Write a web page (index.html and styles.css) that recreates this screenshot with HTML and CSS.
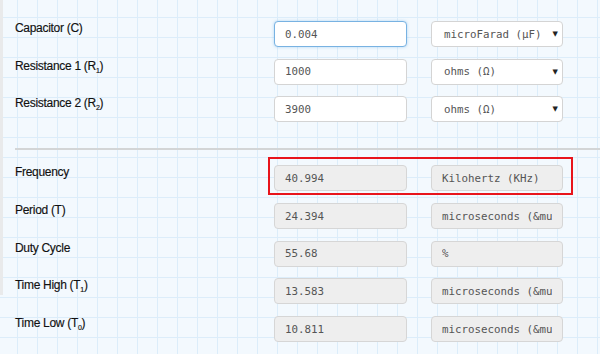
FILE: index.html
```html
<!DOCTYPE html>
<html lang="en">
<head>
    <meta charset="UTF-8">
    <meta name="viewport" content="width=device-width, initial-scale=1.0">
    <title>555 Astable Calculator</title>
    <link rel="stylesheet" href="styles.css">
</head>
<body>
    <div class="calc">
        <div class="inputs">
            <div class="row">
                <label class="name">Capacitor (C)</label>
                <input class="field focus" type="text" value="0.004">
                <div class="unit">microFarad (µF)<span class="arrow">▼</span></div>
            </div>
            <div class="row">
                <label class="name">Resistance 1 (R<sub>1</sub>)</label>
                <input class="field" type="text" value="1000">
                <div class="unit">ohms (Ω)<span class="arrow">▼</span></div>
            </div>
            <div class="row">
                <label class="name">Resistance 2 (R<sub>2</sub>)</label>
                <input class="field" type="text" value="3900">
                <div class="unit">ohms (Ω)<span class="arrow">▼</span></div>
            </div>
        </div>

        <hr class="divider">

        <div class="outputs">
            <div class="row highlight">
                <label class="name">Frequency</label>
                <input class="field readonly" type="text" value="40.994" readonly>
                <input class="field readonly" type="text" value="Kilohertz (KHz)" readonly>
            </div>
            <div class="row">
                <label class="name">Period (T)</label>
                <input class="field readonly" type="text" value="24.394" readonly>
                <input class="field readonly" type="text" value="microseconds (&amp;mu;s)" readonly>
            </div>
            <div class="row">
                <label class="name">Duty Cycle</label>
                <input class="field readonly" type="text" value="55.68" readonly>
                <input class="field readonly" type="text" value="%" readonly>
            </div>
            <div class="row">
                <label class="name">Time High (T<sub>1</sub>)</label>
                <input class="field readonly" type="text" value="13.583" readonly>
                <input class="field readonly" type="text" value="microseconds (&amp;mu;s)" readonly>
            </div>
            <div class="row">
                <label class="name">Time Low (T<sub>0</sub>)</label>
                <input class="field readonly" type="text" value="10.811" readonly>
                <input class="field readonly" type="text" value="microseconds (&amp;mu;s)" readonly>
            </div>
        </div>
    </div>
</body>
</html>
```

FILE: styles.css
```css
html, body {
    margin: 0;
    height: 100%;
}
body {
    font-family: "Liberation Sans", Arial, sans-serif;
    background-color: #f3f9fe;
    background-image:
        linear-gradient(#dcedfa 1px, transparent 1px),
        linear-gradient(90deg, #dcedfa 1px, transparent 1px);
    background-size: 20px 20px;
    background-position: 0 -3px, -3px 0;
    position: relative;
    overflow: hidden;
}
body::before {
    content: "";
    position: absolute;
    left: 0;
    top: 0;
    width: 3px;
    height: 295px;
    background-color: #e9eaeb;
}
.calc {
    padding: 21px 0 0 15px;
}
.row {
    display: grid;
    grid-template-columns: 235px 133px 132px;
    column-gap: 24px;
    align-items: start;
    margin-bottom: 11.7px;
    position: relative;
}
.name {
    font-size: 12px;
    color: #111;
    letter-spacing: -0.3px;
    -webkit-text-stroke: 0.15px #111;
}
.name sub {
    font-size: 7px;
}
.field, .unit {
    box-sizing: border-box;
    height: 26px;
    margin: 0;
    padding: 0 10px;
    font-family: "DejaVu Sans Mono", monospace;
    font-size: 10.8px;
    color: #555;
    background-color: #fff;
    border: 1px solid #d4d4d4;
    border-radius: 4px;
    outline: none;
}
.field.focus {
    border-color: #78b2e2;
    box-shadow: 0 0 3px rgba(102, 175, 233, 0.5);
}
.unit {
    display: flex;
    align-items: center;
    justify-content: space-between;
    padding-left: 12px;
    padding-right: 4px;
}
.arrow {
    font-family: "DejaVu Sans", sans-serif;
    font-size: 7px;
    color: #222;
}
.readonly {
    background-color: #eeeeee;
    border-color: #d6d6d6;
}
.divider {
    border: none;
    border-top: 2px solid #d3d5d6;
    margin: 26px 0 15px 0;
}
.highlight::after {
    content: "";
    position: absolute;
    left: 253px;
    top: -8px;
    width: 301px;
    height: 34px;
    border: 2px solid #e8141b;
}
```
